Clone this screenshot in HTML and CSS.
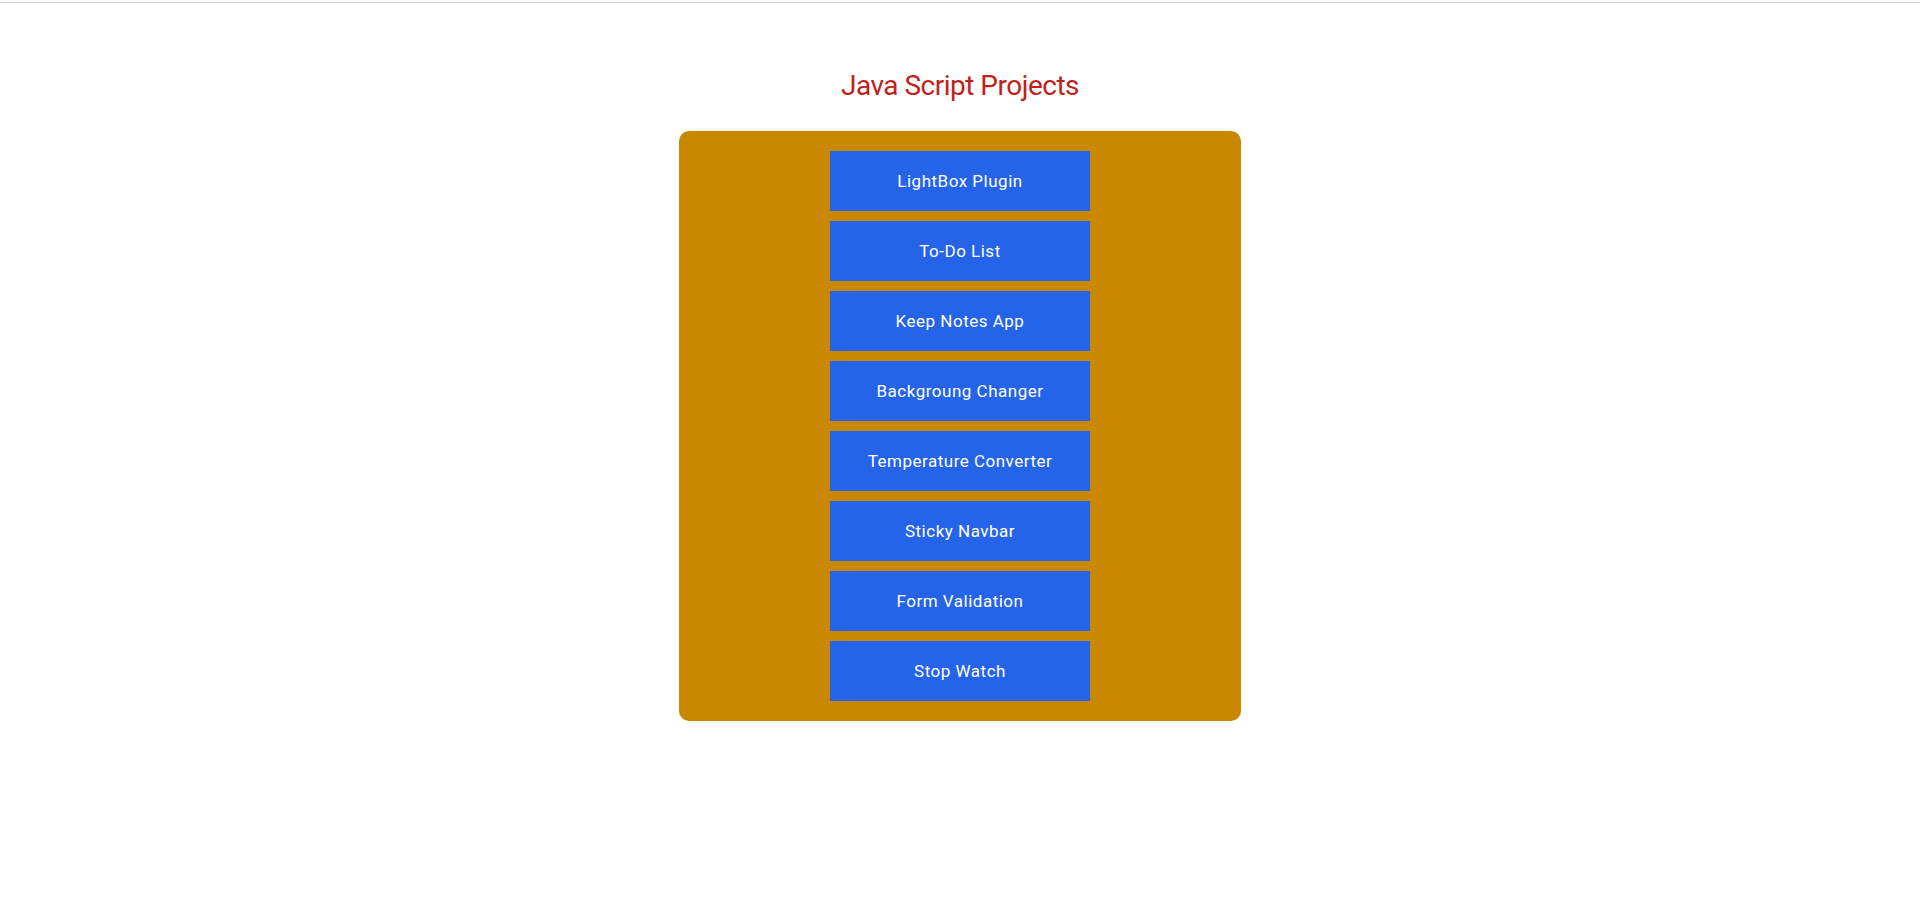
FILE: index.html
```html
<!DOCTYPE html>
<html lang="en">
<head>
<meta charset="utf-8">
<title>Java Script Projects</title>
<link rel="stylesheet" href="styles.css">
</head>
<body>
<div class="topline"></div>
<main class="page">
  <h1 class="title">Java Script Projects</h1>
  <nav class="panel">
    <a class="project" href="#">LightBox Plugin</a>
    <a class="project" href="#">To-Do List</a>
    <a class="project" href="#">Keep Notes App</a>
    <a class="project" href="#">Backgroung Changer</a>
    <a class="project" href="#">Temperature Converter</a>
    <a class="project" href="#">Sticky Navbar</a>
    <a class="project" href="#">Form Validation</a>
    <a class="project" href="#">Stop Watch</a>
  </nav>
</main>
</body>
</html>
```
FILE: styles.css
```css
html, body {
  margin: 0;
  padding: 0;
  background: #ffffff;
  font-family: Roboto, "Liberation Sans", sans-serif;
}

.topline {
  margin-top: 2px;
  height: 1px;
  background: #d0d0d0;
}

.page {
  display: flex;
  flex-direction: column;
  align-items: center;
}

.title {
  margin: 0;
  margin-top: 67px;
  height: 61px;
  font-size: 28px;
  font-weight: 400;
  line-height: 32px;
  letter-spacing: -0.5px;
  color: #c0221b;
}

.panel {
  width: 562px;
  box-sizing: border-box;
  padding: 20px 0;
  background: #c98702;
  border-radius: 10px;
  display: flex;
  flex-direction: column;
  align-items: center;
  gap: 10px;
}

.project {
  width: 260px;
  height: 60px;
  display: flex;
  align-items: center;
  justify-content: center;
  background: #2563e8;
  color: #ffffff;
  text-decoration: none;
  font-size: 17px;
  font-weight: 400;
  letter-spacing: 0.5px;
}
```
